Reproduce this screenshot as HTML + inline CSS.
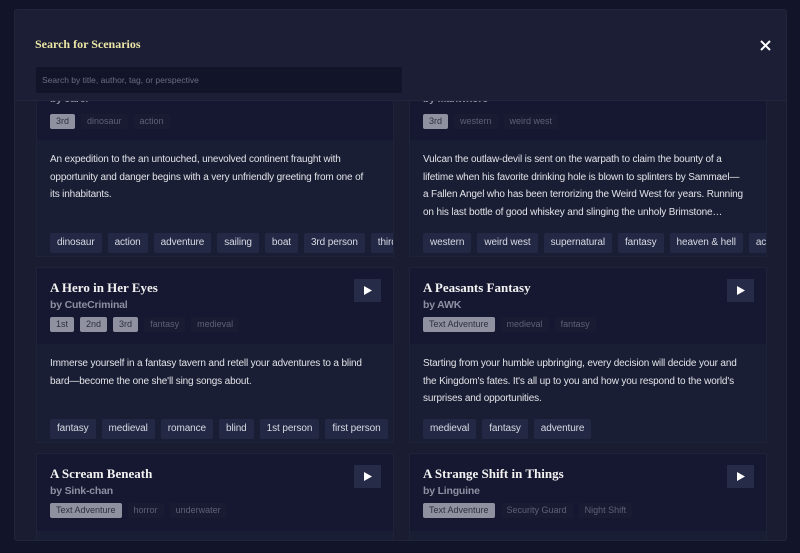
<!DOCTYPE html>
<html><head><meta charset="utf-8"><style>
*{box-sizing:border-box;margin:0;padding:0}
body{width:800px;height:553px;background:#12142a;font-family:"Liberation Sans",sans-serif;overflow:hidden;position:relative}
.modal{position:absolute;left:14px;top:9px;width:773px;height:532px;background:#1a1d32;border:1px solid #22263c;border-radius:3px;overflow:hidden}
.card{position:absolute;width:358px;background:#1a1e34;border:1px solid #1f2339;overflow:hidden}
.hd{background:#151830;padding:11px 13px 0 13px;position:relative}
.t{font-family:"Liberation Serif",serif;font-weight:bold;font-size:13px;color:#f2f2f2;line-height:18px}
.by{font-size:10.5px;color:#8d90a2;line-height:16px;font-weight:bold;letter-spacing:-0.2px}
.tags{display:flex;gap:6px;padding:4px 0 7px}
.p{font-size:9px;line-height:15px;padding:0 6px;border-radius:2px;background:#8f91a0;color:#2e3042}
.f{font-size:9px;line-height:15px;padding:0 6px;border-radius:2px;background:#181b31;color:#5d6078}
.bd{padding:11px 13px 0;font-size:10px;letter-spacing:-0.15px;line-height:17.5px;color:#e2e3e8;white-space:nowrap}
.tg{position:absolute;left:13px;display:flex;gap:6px;white-space:nowrap}
.tg span{background:#232845;color:#d8dae3;font-size:10px;letter-spacing:-0.1px;line-height:20px;padding:0 7px;border-radius:2px}
.play{position:absolute;right:12px;top:11px;width:27px;height:23px;background:#262b47;display:flex;align-items:center;justify-content:center}
.head{position:absolute;left:0;top:0;width:100%;height:91px;background:#1b1e34;border-bottom:1px solid #22263c;z-index:2}
</style></head><body>
<div class="modal">
<div class="head">
<div style="position:absolute;left:20px;top:27px;font-family:'Liberation Serif',serif;font-weight:bold;font-size:12px;color:#ece7a6">Search for Scenarios</div>
<div style="position:absolute;left:21px;top:57px;width:366px;height:26px;background:#12152a;border-radius:2px;font-size:8.5px;color:#6a6d80;line-height:26px;padding-left:6px">Search by title, author, tag, or perspective</div>
<svg style="position:absolute;left:745px;top:30px" width="11" height="11" viewBox="0 0 11 11"><path d="M1 1L10 10M10 1L1 10" stroke="#fff" stroke-width="2"/></svg>
</div>
<div class="card" style="left:21px;top:51px;height:196px">
<div class="hd" style="height:78px"><div class="t">Jurassic Voyage</div><div class="by">by Jarel</div><div class="tags" style="padding-top:7px"><span class="p">3rd</span><span class="f">dinosaur</span><span class="f">action</span></div></div>
<div class="bd">An expedition to the an untouched, unevolved continent fraught with<br>opportunity and danger begins with a very unfriendly greeting from one of<br>its inhabitants.</div>
<div class="tg" style="top:171px"><span>dinosaur</span><span>action</span><span>adventure</span><span>sailing</span><span>boat</span><span>3rd person</span><span>third</span></div>
</div>
<div class="card" style="left:394px;top:51px;height:196px">
<div class="hd" style="height:78px"><div class="t">Brimstone</div><div class="by">by Manwhore</div><div class="tags" style="padding-top:7px"><span class="p">3rd</span><span class="f">western</span><span class="f">weird west</span></div></div>
<div class="bd">Vulcan the outlaw-devil is sent on the warpath to claim the bounty of a<br>lifetime when his favorite drinking hole is blown to splinters by Sammael—<br>a Fallen Angel who has been terrorizing the Weird West for years. Running<br>on his last bottle of good whiskey and slinging the unholy Brimstone…</div>
<div class="tg" style="top:171px"><span>western</span><span>weird west</span><span>supernatural</span><span>fantasy</span><span>heaven &amp; hell</span><span>action</span></div>
</div>
<div class="card" style="left:21px;top:257px;height:176px">
<div class="hd" style="height:76px"><div class="t">A Hero in Her Eyes</div><div class="by">by CuteCriminal</div><div class="tags"><span class="p">1st</span><span class="p">2nd</span><span class="p">3rd</span><span class="f">fantasy</span><span class="f">medieval</span></div>
<div class="play"><svg width="8" height="9"><path d="M0 0L8 4.5L0 9Z" fill="#fff"/></svg></div></div>
<div class="bd">Immerse yourself in a fantasy tavern and retell your adventures to a blind<br>bard—become the one she'll sing songs about.</div>
<div class="tg" style="top:151px"><span>fantasy</span><span>medieval</span><span>romance</span><span>blind</span><span>1st person</span><span>first person</span></div>
</div>
<div class="card" style="left:394px;top:257px;height:176px">
<div class="hd" style="height:76px"><div class="t">A Peasants Fantasy</div><div class="by">by AWK</div><div class="tags"><span class="p">Text Adventure</span><span class="f">medieval</span><span class="f">fantasy</span></div>
<div class="play"><svg width="8" height="9"><path d="M0 0L8 4.5L0 9Z" fill="#fff"/></svg></div></div>
<div class="bd">Starting from your humble upbringing, every decision will decide your and<br>the Kingdom's fates. It's all up to you and how you respond to the world's<br>surprises and opportunities.</div>
<div class="tg" style="top:151px"><span>medieval</span><span>fantasy</span><span>adventure</span></div>
</div>
<div class="card" style="left:21px;top:443px;height:100px">
<div class="hd" style="height:77px"><div class="t">A Scream Beneath</div><div class="by">by Sink-chan</div><div class="tags"><span class="p">Text Adventure</span><span class="f">horror</span><span class="f">underwater</span></div>
<div class="play"><svg width="8" height="9"><path d="M0 0L8 4.5L0 9Z" fill="#fff"/></svg></div></div>
</div>
<div class="card" style="left:394px;top:443px;height:100px">
<div class="hd" style="height:77px"><div class="t">A Strange Shift in Things</div><div class="by">by Linguine</div><div class="tags"><span class="p">Text Adventure</span><span class="f">Security Guard</span><span class="f">Night Shift</span></div>
<div class="play"><svg width="8" height="9"><path d="M0 0L8 4.5L0 9Z" fill="#fff"/></svg></div></div>
</div>
</div>
</body></html>
